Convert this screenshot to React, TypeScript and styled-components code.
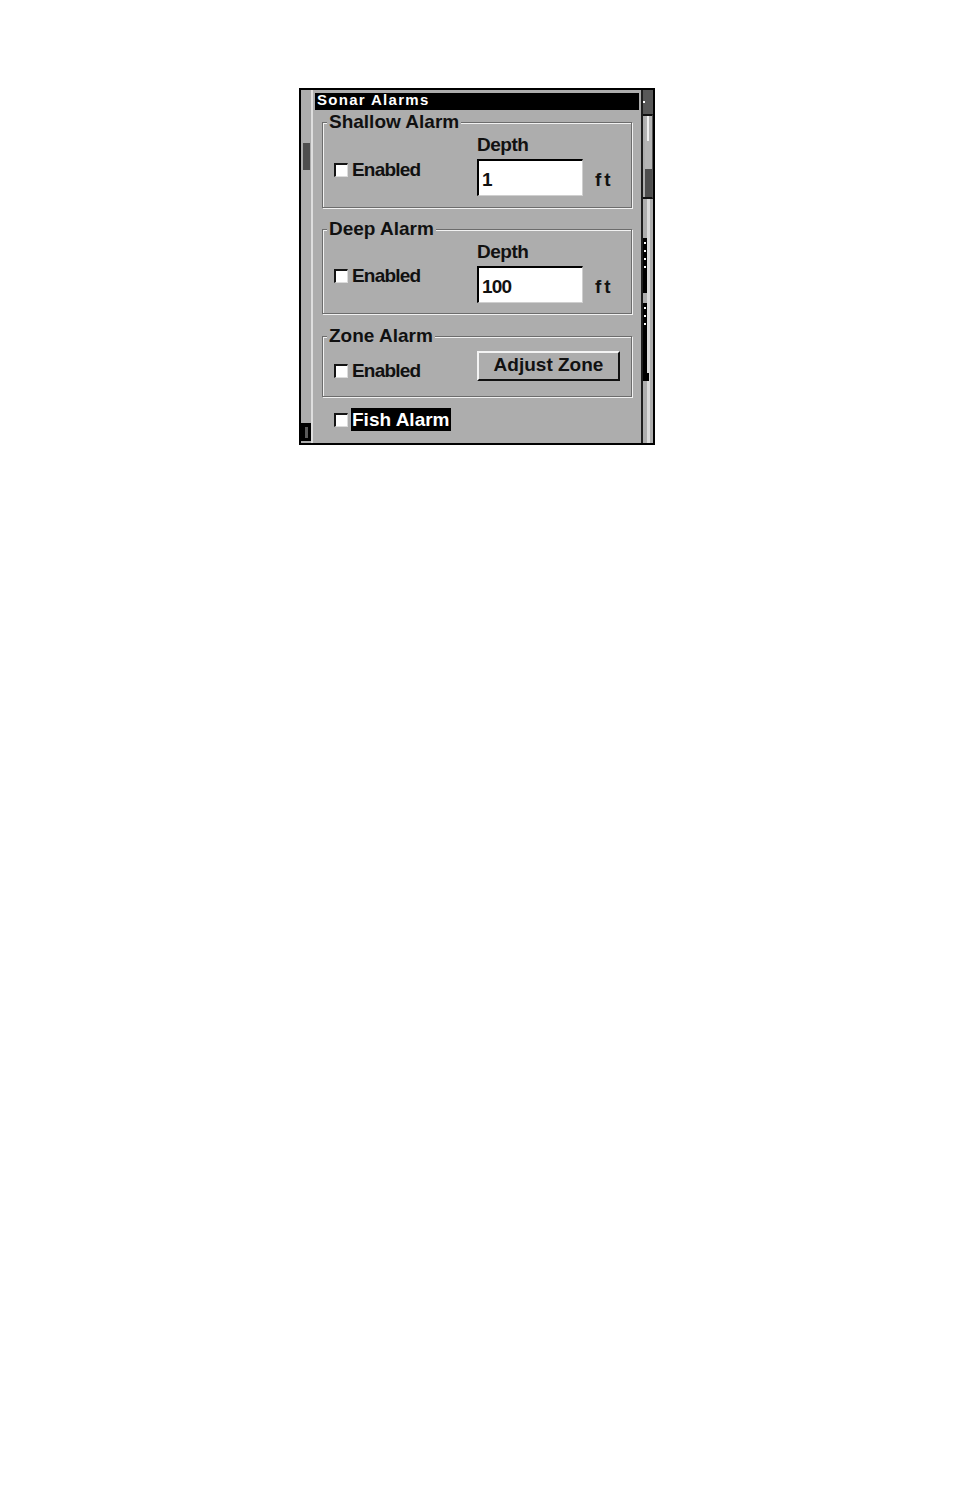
import React from "react";
import styled, { createGlobalStyle } from "styled-components";

const FONT = `"Liberation Sans", Arial, sans-serif`;
const GRAY = "#adadad";

const Global = createGlobalStyle`
  html, body { margin: 0; padding: 0; background: #fff; }
  * { box-sizing: border-box; }
`;

const Page = styled.div`
  padding: 88px 0 0 299px;
  width: 954px;
  height: 1486px;
  background: #fff;
`;

const Device = styled.div`
  width: 356px;
  height: 357px;
  border: 2px solid #000;
  background: ${GRAY};
  display: grid;
  grid-template-columns: 12px 328px 12px;
  font-family: ${FONT};
  font-weight: 700;
  color: #111;
`;

const LeftStrip = styled.div`
  border-right: 2px solid #dedede;
  display: flex;
  flex-direction: column;
  justify-content: space-between;
`;

const StripThumb = styled.div`
  margin: 53px 0 0 2px;
  width: 7px;
  height: 27px;
  background: #4e4e4e;
`;

const StripGlyph = styled.div`
  margin: 0 0 2px 0;
  width: 10px;
  height: 18px;
  background: #000;
  display: flex;
  justify-content: center;
  padding-top: 4px;
`;

const GlyphHole = styled.div`
  width: 3px;
  height: 11px;
  background: #5a5a5a;
`;

const Main = styled.div`
  padding: 3px 0 0 2px;
  display: flex;
  flex-direction: column;
`;

const TitleBar = styled.div`
  height: 17px;
  background: #000;
  color: #fff;
  font-size: 15px;
  letter-spacing: 1.3px;
  line-height: 14px;
  padding-left: 2px;
  margin-right: 2px;
`;

const Group = styled.div<{ $mt: number; $h: number }>`
  position: relative;
  margin: ${(p) => p.$mt}px 9px 0 7px;
  height: ${(p) => p.$h}px;
  border: 1px solid #6c6c6c;
  box-shadow: inset 1px 1px 0 #f2f2f2, 1px 1px 0 #f2f2f2;
`;

const Legend = styled.span`
  position: absolute;
  top: -11px;
  left: 4px;
  padding: 0 2px 0 2px;
  background: ${GRAY};
  font-size: 19px;
  line-height: 20px;
  white-space: nowrap;
`;

const Body = styled.div<{ $pt: number }>`
  display: grid;
  grid-template-columns: 143px 1fr;
  padding: ${(p) => p.$pt}px 0 0 11px;
  align-items: start;
`;

const CheckRow = styled.div<{ $offset?: number }>`
  display: flex;
  align-items: center;
  gap: 4px;
  margin-top: ${(p) => p.$offset ?? 0}px;
`;

const Check = styled.span`
  display: block;
  width: 14px;
  height: 14px;
  background: #fff;
  border-top: 2px solid #141414;
  border-left: 2px solid #141414;
  border-right: 1px solid #dcdcdc;
  border-bottom: 1px solid #dcdcdc;
`;

const Label = styled.span<{ $ls?: number }>`
  font-size: 19px;
  line-height: 20px;
  letter-spacing: ${(p) => p.$ls ?? 0}px;
  white-space: nowrap;
`;

const Field = styled.div`
  display: flex;
  flex-direction: column;
  gap: 4px;
`;

const InputRow = styled.div`
  display: flex;
  align-items: center;
  gap: 12px;
`;

const InputBox = styled.div`
  width: 106px;
  height: 37px;
  background: #fff;
  border-top: 2px solid #000;
  border-left: 2px solid #000;
  border-right: 1px solid #cfcfcf;
  border-bottom: 1px solid #cfcfcf;
  padding: 9px 0 0 3px;
  font-size: 19px;
  line-height: 20px;
  letter-spacing: -0.8px;
`;

const Unit = styled.span`
  font-size: 19px;
  line-height: 20px;
  letter-spacing: 3px;
  padding-top: 4px;
`;

const Button = styled.div`
  width: 143px;
  height: 30px;
  border-top: 2px solid #f4f4f4;
  border-left: 2px solid #f4f4f4;
  border-right: 2px solid #111;
  border-bottom: 2px solid #111;
  display: flex;
  align-items: center;
  justify-content: center;
  padding-bottom: 3px;
  font-size: 19px;
  line-height: 20px;
  white-space: nowrap;
`;

const FishRow = styled.div`
  display: flex;
  align-items: center;
  gap: 3px;
  margin: 11px 0 0 19px;
`;

const Highlight = styled.span`
  background: #000;
  color: #fff;
  height: 23px;
  padding: 0 1px 0 1px;
  font-size: 19px;
  line-height: 23px;
  white-space: nowrap;
`;

const RightCol = styled.div`
  border-left: 2px solid #1e1e1e;
  display: flex;
  flex-direction: column;
`;

const CapTop = styled.div`
  height: 24px;
  background: #585858;
  display: flex;
  align-items: center;
`;

const Dot = styled.span<{ $c?: string }>`
  display: block;
  width: 2px;
  height: 2px;
  background: ${(p) => p.$c ?? "#fff"};
`;

const ScrollBox = styled.div`
  border-top: 2px solid #111;
  border-bottom: 2px solid #111;
  border-right: 1px solid #555;
  display: flex;
  flex-direction: column;
`;

const Seg = styled.div<{ $h: number; $bg: string; $stripe?: string }>`
  height: ${(p) => p.$h}px;
  background: ${(p) => p.$bg};
  border-left: 2px solid ${(p) => p.$bg};
  box-shadow: ${(p) => (p.$stripe ? `inset 2px 0 0 ${p.$stripe}` : "none")};
  margin-left: 2px;
`;

const Track = styled.div`
  flex: 1;
  display: flex;
  flex-direction: column;
  padding-top: 39px;
  border-right: 3px solid ${GRAY};
  box-shadow: inset -3px 0 0 #dadada;
`;

const TrackBar = styled.div<{ $h: number; $w: number; $mt?: number }>`
  width: ${(p) => p.$w}px;
  height: ${(p) => p.$h}px;
  margin-top: ${(p) => p.$mt ?? 0}px;
  background: #000;
  display: flex;
  flex-direction: column;
  align-items: center;
  gap: 6px;
  padding-top: 4px;
`;

type GroupProps = {
  title: string;
  mt: number;
  h: number;
  children: React.ReactNode;
};

function AlarmGroup({ title, mt, h, children }: GroupProps) {
  return (
    <Group $mt={mt} $h={h}>
      <Legend>{title}</Legend>
      {children}
    </Group>
  );
}

function Enabled({ offset }: { offset: number }) {
  return (
    <CheckRow $offset={offset}>
      <Check />
      <Label $ls={-0.8}>Enabled</Label>
    </CheckRow>
  );
}

function DepthField({ value }: { value: string }) {
  return (
    <Field>
      <Label $ls={-0.5}>Depth</Label>
      <InputRow>
        <InputBox>{value}</InputBox>
        <Unit>ft</Unit>
      </InputRow>
    </Field>
  );
}

export default function App() {
  return (
    <Page>
      <Global />
      <Device>
        <LeftStrip>
          <StripThumb />
          <StripGlyph>
            <GlyphHole />
          </StripGlyph>
        </LeftStrip>
        <Main>
          <TitleBar>Sonar Alarms</TitleBar>
          <AlarmGroup title="Shallow Alarm" mt={12} h={86}>
            <Body $pt={12}>
              <Enabled offset={25} />
              <DepthField value="1" />
            </Body>
          </AlarmGroup>
          <AlarmGroup title="Deep Alarm" mt={21} h={85}>
            <Body $pt={12}>
              <Enabled offset={24} />
              <DepthField value="100" />
            </Body>
          </AlarmGroup>
          <AlarmGroup title="Zone Alarm" mt={22} h={61}>
            <Body $pt={14}>
              <Enabled offset={10} />
              <Button>Adjust Zone</Button>
            </Body>
          </AlarmGroup>
          <FishRow>
            <Check />
            <Highlight>Fish Alarm</Highlight>
          </FishRow>
        </Main>
        <RightCol>
          <CapTop>
            <Dot />
          </CapTop>
          <ScrollBox>
            <Seg $h={25} $bg="#b4b4b4" $stripe="#f0f0f0" />
            <Seg $h={28} $bg="#b4b4b4" />
            <Seg $h={28} $bg="#4e4e4e" />
          </ScrollBox>
          <Track>
            <TrackBar $w={4} $h={55}>
              <Dot />
              <Dot />
              <Dot />
              <Dot />
            </TrackBar>
            <TrackBar $w={4} $h={70} $mt={10}>
              <Dot />
              <Dot />
              <Dot />
            </TrackBar>
            <TrackBar $w={6} $h={8} />
          </Track>
        </RightCol>
      </Device>
    </Page>
  );
}
